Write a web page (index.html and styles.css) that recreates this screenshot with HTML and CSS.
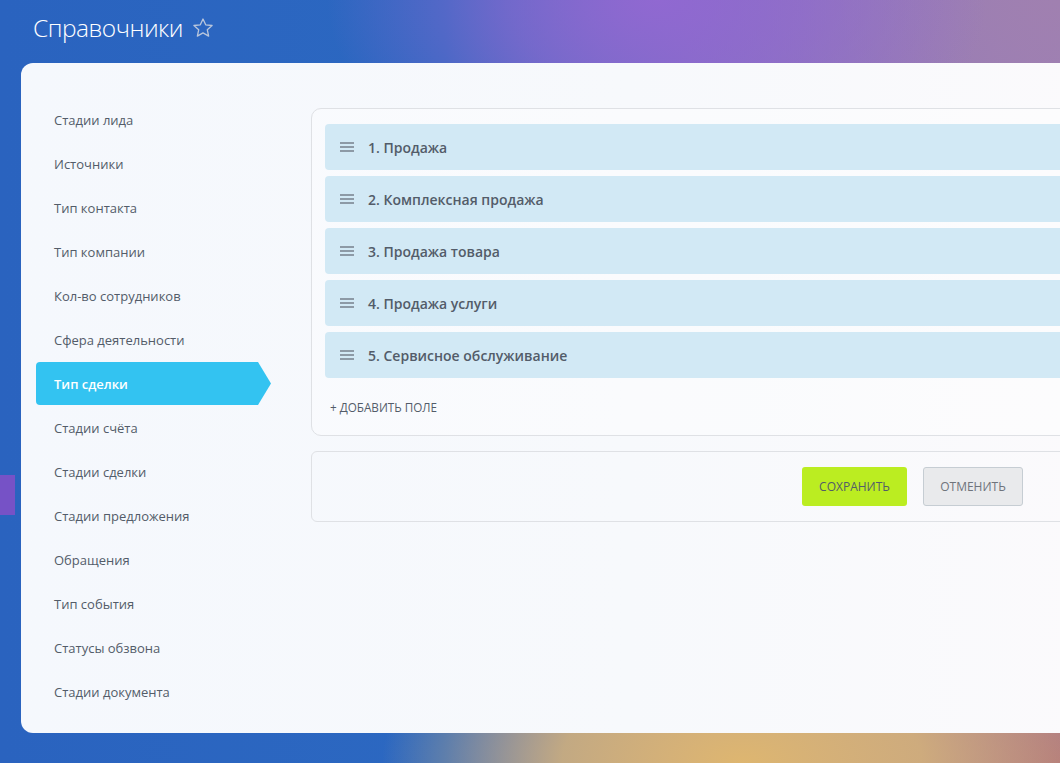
FILE: index.html
```html
<!DOCTYPE html>
<html lang="ru">
<head>
<meta charset="utf-8">
<title>Справочники</title>
<link rel="stylesheet" href="styles.css">
</head>
<body>
<div class="deco"></div>
<header class="page-header">
  <h1 class="page-title">Справочники</h1>
  <svg class="star" width="22" height="22" viewBox="0 0 20 20"><path d="M10 1.8l2.45 5.3 5.8.62-4.33 3.93 1.2 5.72L10 14.46l-5.12 2.91 1.2-5.72L1.75 7.72l5.8-.62z" fill="none" stroke="#b9c6dc" stroke-width="1.2" stroke-linejoin="round"/></svg>
</header>
<main class="card">
  <nav class="menu">
    <a class="menu-item">Стадии лида</a>
    <a class="menu-item">Источники</a>
    <a class="menu-item">Тип контакта</a>
    <a class="menu-item">Тип компании</a>
    <a class="menu-item">Кол-во сотрудников</a>
    <a class="menu-item">Сфера деятельности</a>
    <a class="menu-item active">Тип сделки</a>
    <a class="menu-item">Стадии счёта</a>
    <a class="menu-item">Стадии сделки</a>
    <a class="menu-item">Стадии предложения</a>
    <a class="menu-item">Обращения</a>
    <a class="menu-item">Тип события</a>
    <a class="menu-item">Статусы обзвона</a>
    <a class="menu-item">Стадии документа</a>
  </nav>
  <section class="content">
    <div class="list-box">
      <div class="rows">
        <div class="row"><span class="handle"><i></i><i></i><i></i></span><span class="row-text">1. Продажа</span></div>
        <div class="row"><span class="handle"><i></i><i></i><i></i></span><span class="row-text">2. Комплексная продажа</span></div>
        <div class="row"><span class="handle"><i></i><i></i><i></i></span><span class="row-text">3. Продажа товара</span></div>
        <div class="row"><span class="handle"><i></i><i></i><i></i></span><span class="row-text">4. Продажа услуги</span></div>
        <div class="row"><span class="handle"><i></i><i></i><i></i></span><span class="row-text">5. Сервисное обслуживание</span></div>
      </div>
      <div class="add-field">+ Добавить поле</div>
    </div>
    <div class="button-panel">
      <button class="btn btn-save">Сохранить</button>
      <button class="btn btn-cancel">Отменить</button>
    </div>
  </section>
</main>
</body>
</html>
```
FILE: styles.css
```css
html, body {
  margin: 0;
  padding: 0;
}
body {
  width: 1060px;
  height: 763px;
  overflow: hidden;
  position: relative;
  font-family: "Open Sans", "Noto Sans", sans-serif;
  background:
    radial-gradient(ellipse 330px 200px at 62% 0%, rgba(146,104,210,0.95) 0%, rgba(146,104,210,0.6) 45%, rgba(146,104,210,0) 100%),
    radial-gradient(ellipse 360px 190px at 70% 100%, rgba(222,182,112,1) 0%, rgba(214,180,120,0.85) 50%, rgba(214,180,120,0) 100%),
    radial-gradient(ellipse 300px 260px at 100% 100%, rgba(176,118,124,1) 0%, rgba(176,118,124,0) 100%),
    radial-gradient(ellipse 380px 300px at 100% 0%, rgba(160,128,176,1) 0%, rgba(160,128,176,0) 100%),
    linear-gradient(90deg, #2a63bf 0%, #2c68c1 42%, #7a6fc0 65%, #9a7fb8 100%);
}
.deco {
  position: absolute;
  left: 0;
  top: 475px;
  width: 15px;
  height: 40px;
  background: #7652c6;
}
.page-header {
  display: flex;
  align-items: center;
  gap: 9px;
  height: 55px;
  padding-left: 33px;
}
.page-title {
  margin: 0;
  font-weight: 300;
  font-size: 24.5px;
  color: #ffffff;
  letter-spacing: -0.5px;
}
.star {
  margin-top: 1px;
}
.card {
  position: relative;
  margin: 8px 0 0 21px;
  width: 1520px;
  height: 670px;
  border-radius: 12px;
  background: linear-gradient(90deg, #f5f8fd 0%, #f7f9fc 40%, #fbfafc 70%);
  display: flex;
  box-sizing: border-box;
  padding: 35px 0 0 15px;
}
.menu {
  display: flex;
  flex-direction: column;
  width: 240px;
  flex-shrink: 0;
}
.menu-item {
  display: flex;
  align-items: center;
  height: 44px;
  padding-left: 18px;
  font-size: 13px;
  color: #535c69;
  box-sizing: border-box;
}
.menu-item.active {
  height: 43px;
  margin-bottom: 1px;
  width: 235px;
  color: #ffffff;
  font-weight: 600;
  background: #33c3f1;
  border-radius: 4px 0 0 4px;
  clip-path: polygon(0 0, 222px 0, 235px 50%, 222px 100%, 0 100%);
}
.content {
  margin-left: 35px;
  margin-top: 10px;
  width: 1203px;
  display: flex;
  flex-direction: column;
  gap: 15px;
}
.list-box {
  border: 1px solid #dfe1e5;
  border-radius: 10px;
  background: rgba(255,255,255,0.35);
  padding: 15px 13px 0;
  height: 328px;
  box-sizing: border-box;
}
.rows {
  display: flex;
  flex-direction: column;
  gap: 6px;
}
.row {
  display: flex;
  align-items: center;
  height: 46px;
  border-radius: 4px;
  background: #d2e9f5;
  padding-left: 15px;
}
.handle {
  display: flex;
  flex-direction: column;
  gap: 2px;
  width: 14px;
  margin-right: 14px;
}
.handle i {
  display: block;
  height: 2px;
  background: #8d9aa6;
}
.row-text {
  font-size: 14px;
  font-weight: 600;
  color: #535c69;
}
.add-field {
  margin-top: 21px;
  padding-left: 5px;
  font-size: 11.7px;
  text-transform: uppercase;
  color: #535c69;
}
.button-panel {
  height: 71px;
  box-sizing: border-box;
  border: 1px solid #dfe1e5;
  border-radius: 6px;
  display: flex;
  align-items: center;
  justify-content: center;
  gap: 16px;
}
.btn {
  height: 39px;
  border-radius: 3px;
  font-family: "Open Sans", "Noto Sans", sans-serif;
  font-size: 12px;
  text-transform: uppercase;
  font-weight: 500;
  padding: 0;
  cursor: pointer;
}
.btn-save {
  width: 105px;
  background: #bbed21;
  border: none;
  color: #535c69;
}
.btn-cancel {
  width: 100px;
  background: #e9eaec;
  border: 1px solid #c6cdd3;
  color: #6f747c;
}
```
